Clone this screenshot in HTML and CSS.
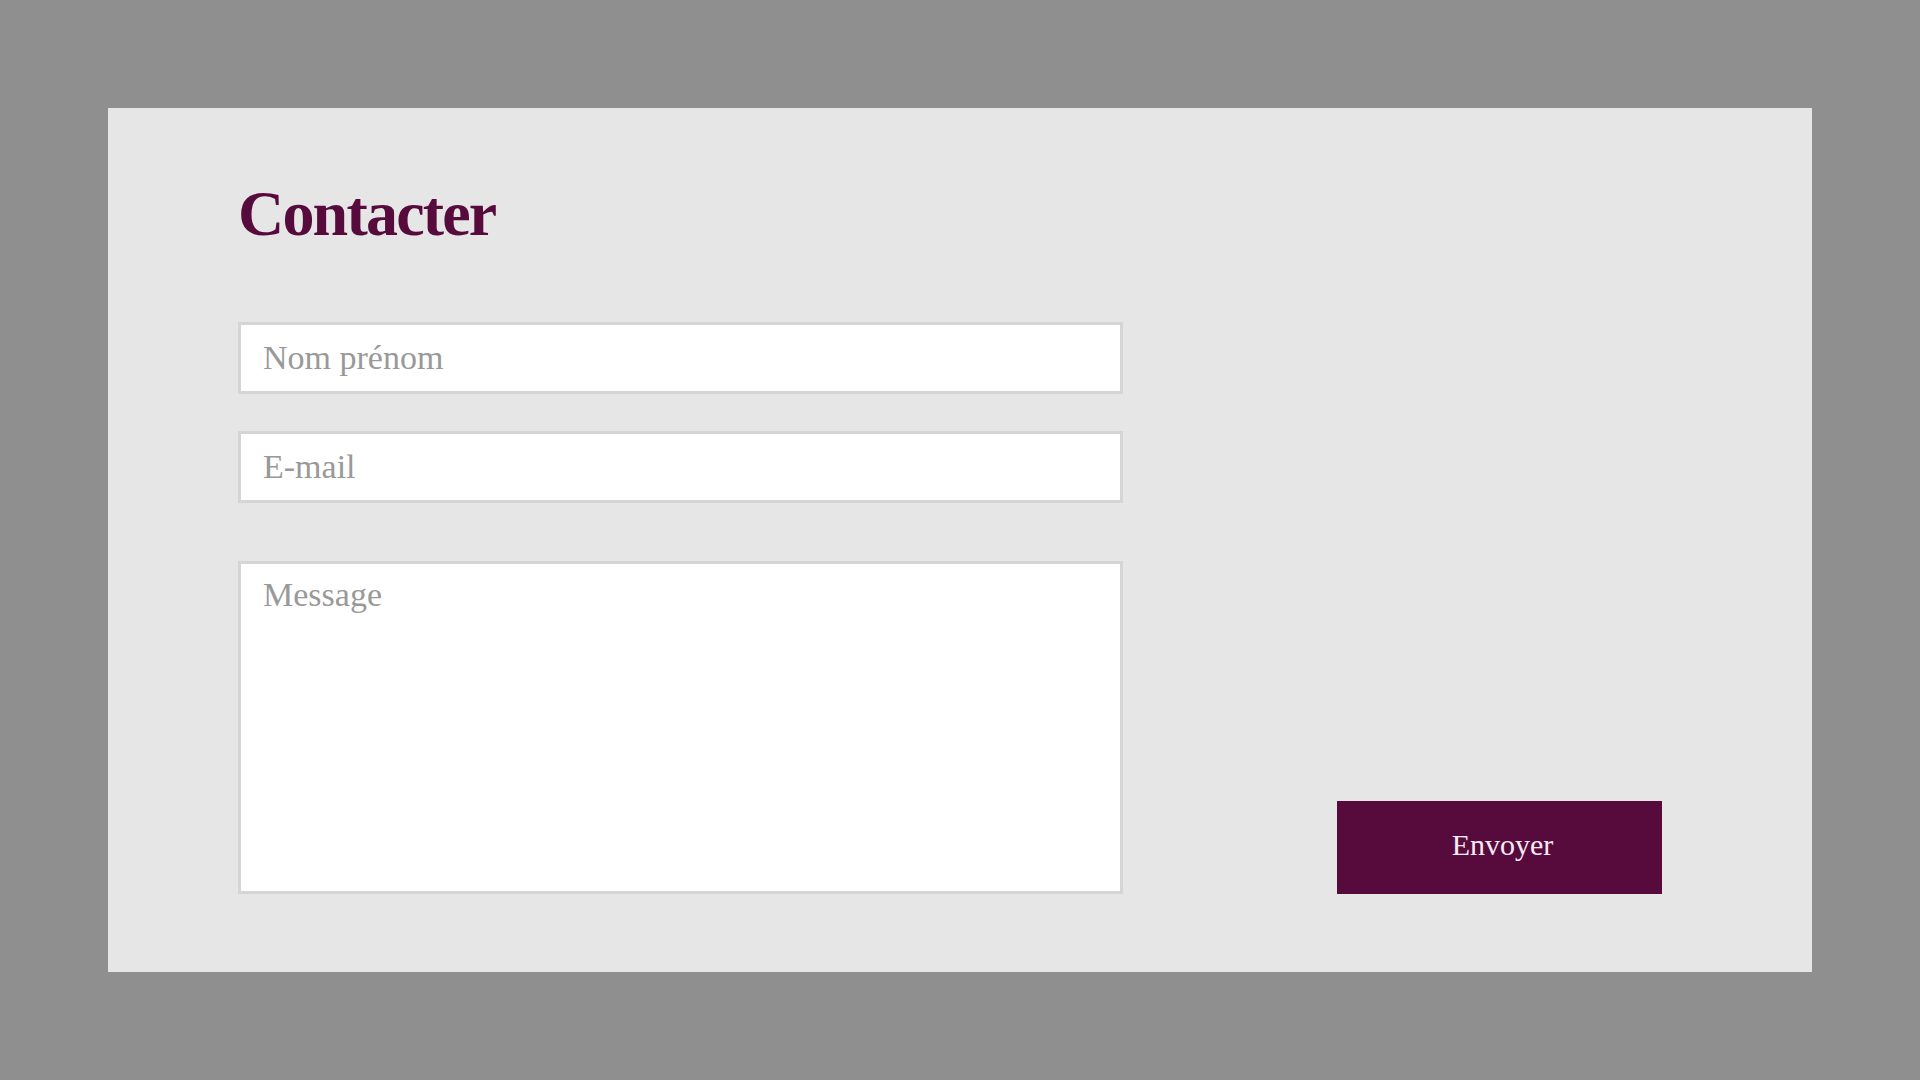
FILE: index.html
```html
<!DOCTYPE HTML>
<html>

<head>
    <meta charset="utf-8">
    <title>Contacter</title>
    <link rel="stylesheet" href="styles.css">
</head>

<body>
    <div class='card'>
        <form class='contact' onsubmit='return false'>
            <div class='fields'>
                <h1 class='title'>Contacter</h1>
                <input class='field' type='text' placeholder='Nom prénom' />
                <input class='field field-mail' type='email' placeholder='E-mail' />
                <textarea class='field field-msg' placeholder='Message'></textarea>
            </div>
            <button class='send' type='submit'>Envoyer</button>
        </form>
    </div>
</body>

</html>
```

FILE: styles.css
```css
body {
    margin: 0;
    height: 1080px;
    background: #8f8f8f;
    font-family: "Liberation Serif", "Times New Roman", serif;
}

.card {
    margin: 108px;
    height: 864px;
    box-sizing: border-box;
    padding: 76px 150px 78px 130px;
    background: #e6e6e6;
}

.contact {
    display: flex;
    justify-content: space-between;
    align-items: flex-end;
    height: 100%;
}

.fields {
    display: flex;
    flex-direction: column;
    width: 885px;
}

.title {
    margin: 0 0 78px 0;
    font-size: 64px;
    line-height: 60px;
    letter-spacing: -1.8px;
    font-weight: bold;
    color: #570b3d;
}

.field {
    box-sizing: border-box;
    width: 100%;
    height: 72px;
    margin: 0;
    padding: 0 22px;
    border: 3px solid #d5d5d5;
    background: #fff;
    font-family: "Liberation Serif", "Times New Roman", serif;
    font-size: 34px;
    color: #333;
    outline: none;
}

.field::placeholder {
    color: #999;
}

.field-mail {
    margin-top: 37px;
}

.field-msg {
    margin-top: 58px;
    height: 333px;
    padding: 11px 22px;
    line-height: 40px;
    resize: none;
}

.send {
    box-sizing: border-box;
    width: 325px;
    height: 93px;
    padding: 0 0 6px 6px;
    border: none;
    background: #570b3d;
    color: #f6eaf2;
    font-family: "Liberation Serif", "Times New Roman", serif;
    font-size: 30px;
    cursor: pointer;
}
```
